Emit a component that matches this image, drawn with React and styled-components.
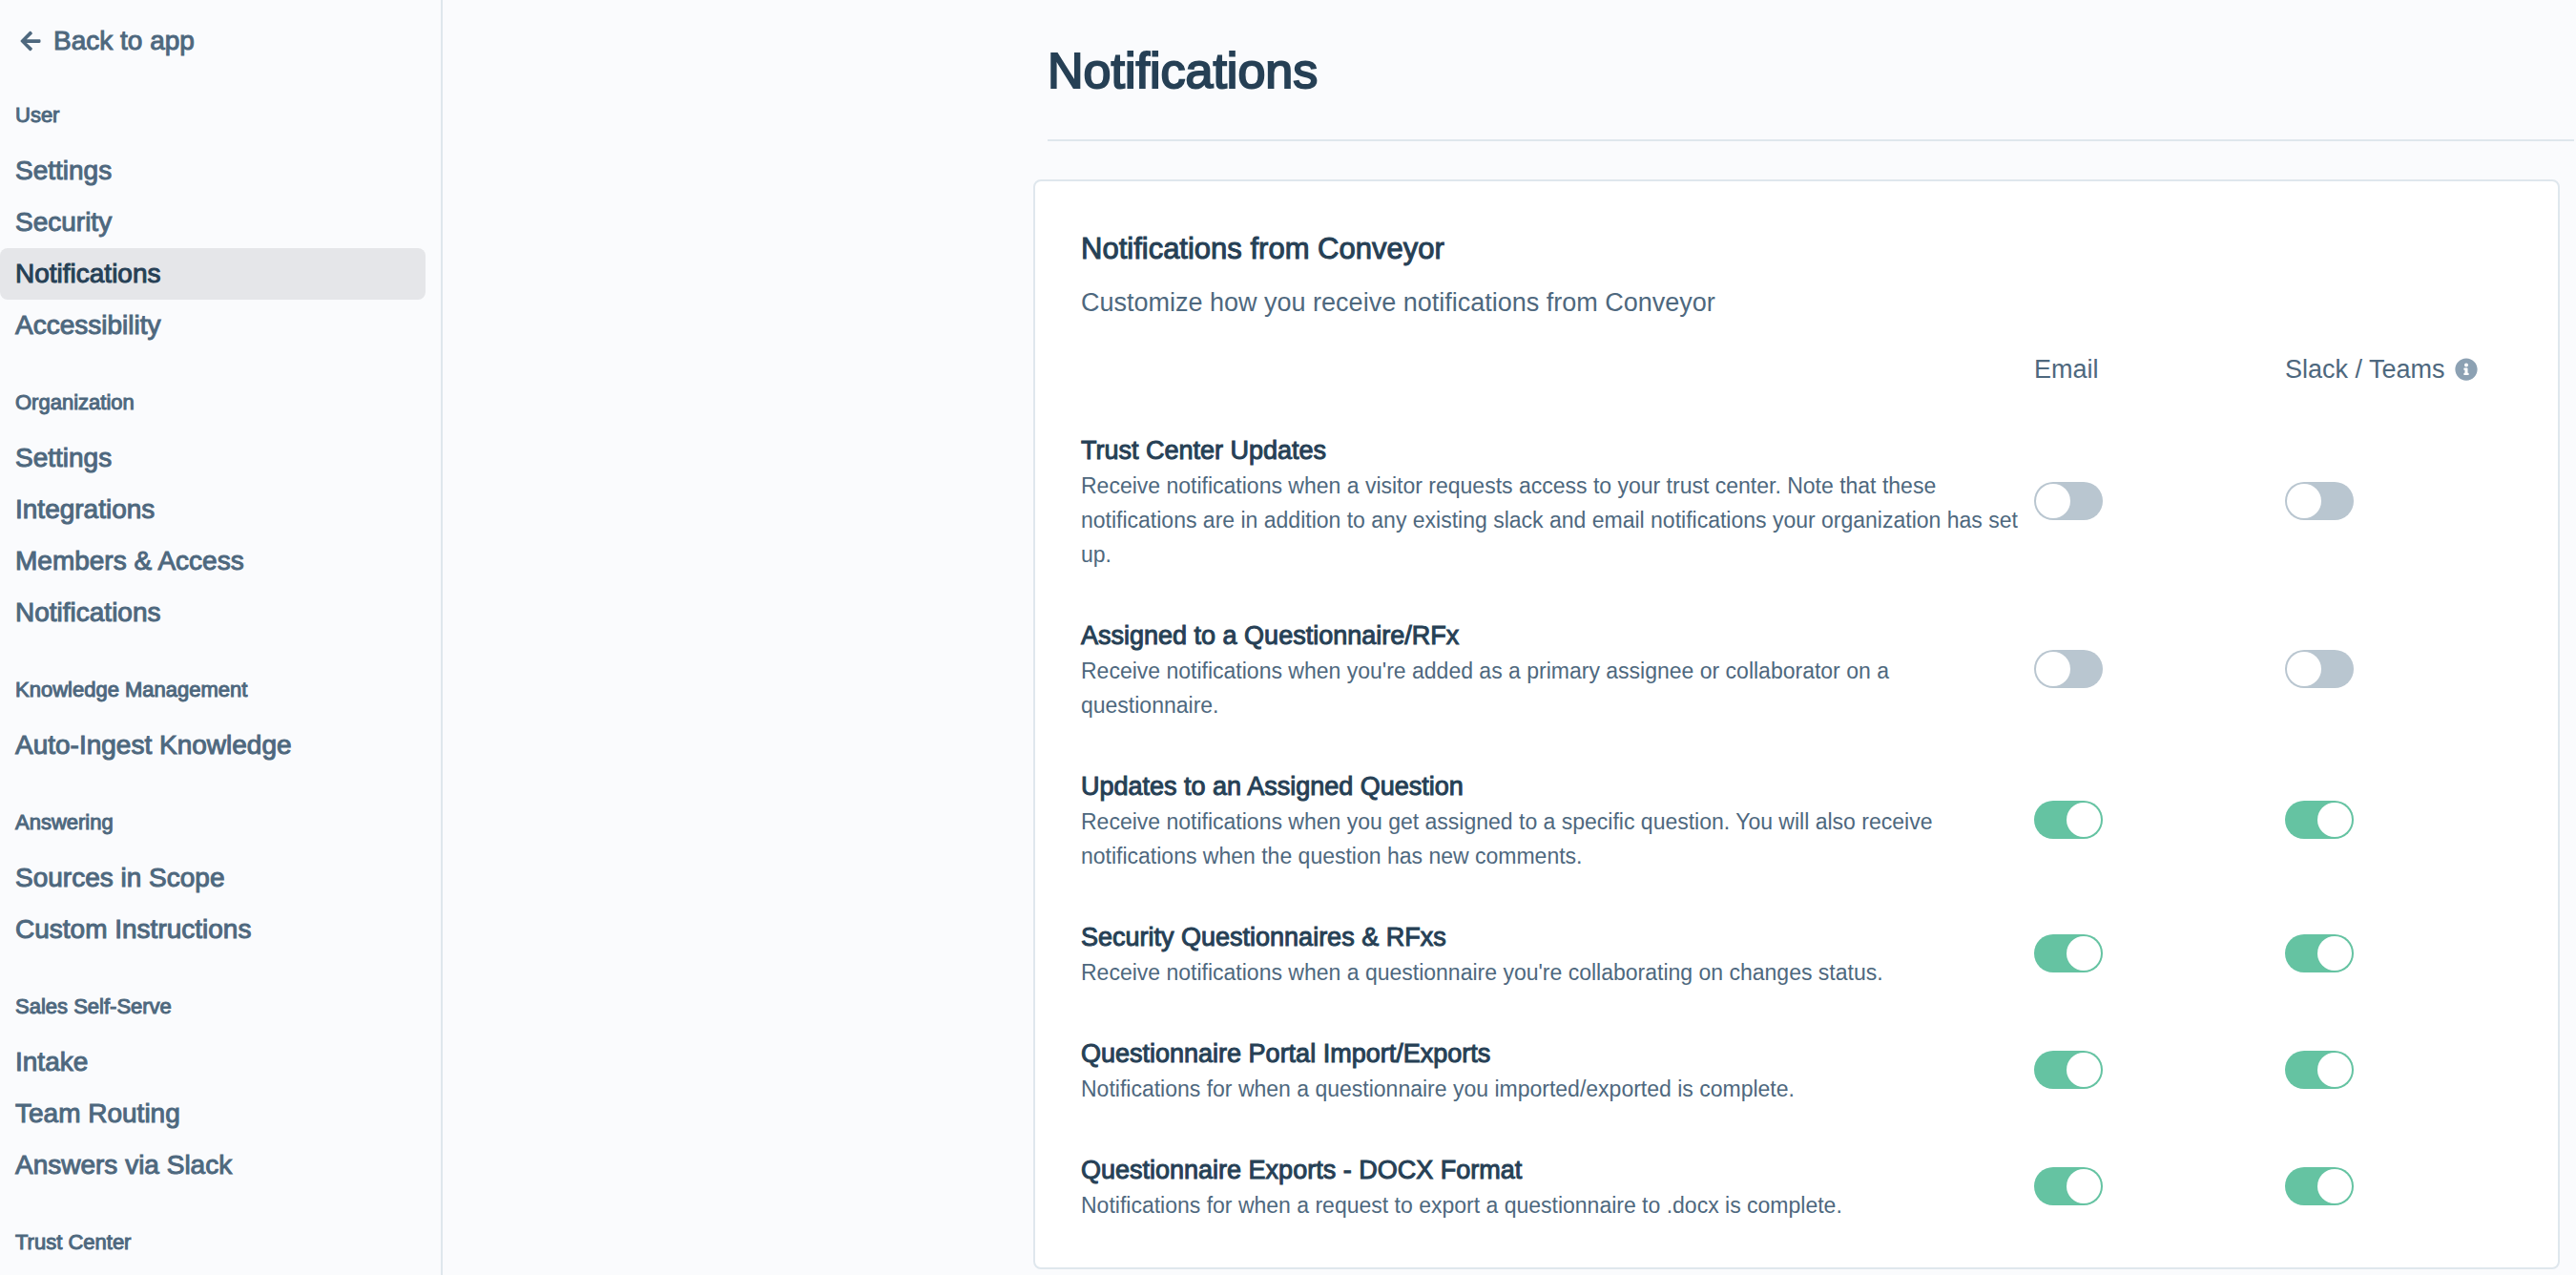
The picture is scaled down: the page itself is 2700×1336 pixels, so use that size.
import React, { useState } from 'react';
import styled, { createGlobalStyle, css, ThemeProvider } from 'styled-components';
import { FaArrowLeft, FaInfoCircle } from 'react-icons/fa';

const theme = {
  colors: {
    page: '#fafbfd',
    card: '#ffffff',
    border: '#dfe7ed',
    heading: '#264055',
    text: '#4e687e',
    muted: '#8ca1b3',
    active: 'rgba(20, 20, 30, 0.09)',
    switchOff: '#b9c6d0',
    switchOn: '#65c3a2',
  },
};

const GlobalStyle = createGlobalStyle`
  * {
    box-sizing: border-box;
  }

  body {
    margin: 0;
    background: ${theme.colors.page};
    color: ${theme.colors.text};
    font-family: 'Liberation Sans', Arial, sans-serif;
    font-size: 27px;
  }
`;

// the font has no medium cut, so a thin stroke stands between regular and bold
const medium = css`
  font-weight: 400;
  -webkit-text-stroke: 1px currentColor;
`;

const Layout = styled.div`
  display: flex;
  min-height: 100vh;
`;

const Sidebar = styled.aside`
  flex: none;
  width: 464px;
  padding: 16px 16px 0 0;
  border-right: 2px solid ${(props) => props.theme.colors.border};
`;

const BackLink = styled.a`
  ${medium}
  display: flex;
  align-items: center;
  gap: 12px;
  padding-left: 20px;
  color: ${(props) => props.theme.colors.text};
  font-size: 28px;
  line-height: 54px;
  text-decoration: none;
`;

const Nav = styled.nav`
  display: flex;
  flex-direction: column;
  gap: 41px;
  padding-top: 38px;
`;

const SectionTitle = styled.h2`
  ${medium}
  margin: 0 0 18px;
  padding-left: 16px;
  font-size: 22px;
  line-height: 26px;
`;

const NavList = styled.ul`
  margin: 0;
  padding: 0;
  list-style: none;
`;

const NavLink = styled.a`
  ${medium}
  display: block;
  padding-left: 16px;
  border-radius: 8px;
  background: ${(props) => props.$active ? props.theme.colors.active : 'transparent'};
  color: ${(props) => props.theme.colors[props.$active ? 'heading' : 'text']};
  font-size: 28px;
  line-height: 54px;
  text-decoration: none;
`;

const Main = styled.main`
  flex: 1;
  min-width: 0;
  display: flex;
  flex-direction: column;
  align-items: flex-end;
  padding: 0 2px 6px;
`;

const PageHeader = styled.header`
  width: 100%;
  max-width: 1600px;
  padding: 42px 0 40px;
  border-bottom: 2px solid ${(props) => props.theme.colors.border};
`;

const PageTitle = styled.h1`
  ${medium}
  margin: 0;
  color: ${(props) => props.theme.colors.heading};
  font-size: 52px;
  line-height: 64px;
  -webkit-text-stroke-width: 2px;
`;

const Card = styled.section`
  width: 100%;
  max-width: 1600px;
  margin: 40px 15px 0 0;
  padding: 49px 48px 24px;
  border: 2px solid ${(props) => props.theme.colors.border};
  border-radius: 8px;
  background: ${(props) => props.theme.colors.card};
`;

const CardTitle = styled.h2`
  ${medium}
  margin: 0 0 12px;
  color: ${(props) => props.theme.colors.heading};
  font-size: 31px;
  line-height: 44px;
`;

const CardText = styled.p`
  margin: 0;
  line-height: 44px;
`;

const Table = styled.table`
  width: 100%;
  table-layout: fixed;
  border-collapse: collapse;
  text-align: left;
`;

const ColumnHeader = styled.th`
  width: ${(props) => props.$width || 'auto'};
  padding: 26px 0 19px;
  font-weight: 400;
  line-height: 44px;
`;

const HeaderLabel = styled.span`
  display: flex;
  align-items: center;
  gap: 10px;
`;

const InfoButton = styled.button`
  display: flex;
  padding: 0;
  border: 0;
  background: none;
  color: ${(props) => props.theme.colors.muted};
  font-size: 24px;
`;

const RowHeader = styled.th`
  padding: 25px 16px 23px 0;
  font-weight: 400;
`;

const RowTitle = styled.div`
  ${medium}
  color: ${(props) => props.theme.colors.heading};
  font-size: 27px;
  line-height: 38px;
`;

const RowText = styled.div`
  font-size: 23px;
  line-height: 36px;
`;

const SwitchCell = styled.td`
  padding: 0;
  vertical-align: middle;
`;

const Switch = styled.input`
  appearance: none;
  display: block;
  width: 72px;
  height: 40px;
  margin: 0;
  padding: 2px;
  border-radius: 20px;
  background: ${(props) => props.theme.colors.switchOff};
  cursor: pointer;

  &::before {
    content: '';
    display: block;
    width: 36px;
    height: 36px;
    border-radius: 50%;
    background: #ffffff;
  }

  &:checked {
    background: ${(props) => props.theme.colors.switchOn};
  }

  &:checked::before {
    margin-left: auto;
  }
`;

const sections = [
  { title: 'User', items: ['Settings', 'Security', 'Notifications', 'Accessibility'], active: 'Notifications' },
  { title: 'Organization', items: ['Settings', 'Integrations', 'Members & Access', 'Notifications'] },
  { title: 'Knowledge Management', items: ['Auto-Ingest Knowledge'] },
  { title: 'Answering', items: ['Sources in Scope', 'Custom Instructions'] },
  { title: 'Sales Self-Serve', items: ['Intake', 'Team Routing', 'Answers via Slack'] },
  { title: 'Trust Center', items: [] },
];

const notifications = [
  {
    title: 'Trust Center Updates',
    text: 'Receive notifications when a visitor requests access to your trust center. Note that these notifications are in addition to any existing slack and email notifications your organization has set up.',
    enabled: false,
  },
  {
    title: 'Assigned to a Questionnaire/RFx',
    text: "Receive notifications when you're added as a primary assignee or collaborator on a questionnaire.",
    enabled: false,
  },
  {
    title: 'Updates to an Assigned Question',
    text: 'Receive notifications when you get assigned to a specific question. You will also receive notifications when the question has new comments.',
    enabled: true,
  },
  {
    title: 'Security Questionnaires & RFxs',
    text: "Receive notifications when a questionnaire you're collaborating on changes status.",
    enabled: true,
  },
  {
    title: 'Questionnaire Portal Import/Exports',
    text: 'Notifications for when a questionnaire you imported/exported is complete.',
    enabled: true,
  },
  {
    title: 'Questionnaire Exports - DOCX Format',
    text: 'Notifications for when a request to export a questionnaire to .docx is complete.',
    enabled: true,
  },
];

const NotificationRow = ({ title, text, enabled }) => {
  const [email, setEmail] = useState(enabled);
  const [slack, setSlack] = useState(enabled);

  return (
    <tr>
      <RowHeader scope="row">
        <RowTitle>{ title }</RowTitle>
        <RowText>{ text }</RowText>
      </RowHeader>
      <SwitchCell>
        <Switch
          type="checkbox"
          role="switch"
          aria-label={`${title}: Email`}
          checked={email}
          onChange={(e) => setEmail(e.target.checked)}
        />
      </SwitchCell>
      <SwitchCell>
        <Switch
          type="checkbox"
          role="switch"
          aria-label={`${title}: Slack / Teams`}
          checked={slack}
          onChange={(e) => setSlack(e.target.checked)}
        />
      </SwitchCell>
    </tr>
  );
};

const App = () => (
  <ThemeProvider theme={theme}>
    <GlobalStyle />
    <Layout>
      <Sidebar>
        <BackLink href="#app">
          <FaArrowLeft size={24} aria-hidden="true" />
          Back to app
        </BackLink>
        <Nav aria-label="Settings">
          { sections.map((section) => (
            <div key={section.title}>
              <SectionTitle>{ section.title }</SectionTitle>
              { section.items.length > 0 &&
                <NavList>
                  { section.items.map((item) => (
                    <li key={item}>
                      <NavLink
                        href="#settings"
                        $active={item === section.active}
                        aria-current={item === section.active ? 'page' : undefined}
                      >
                        { item }
                      </NavLink>
                    </li>
                  )) }
                </NavList>
              }
            </div>
          )) }
        </Nav>
      </Sidebar>
      <Main>
        <PageHeader>
          <PageTitle>Notifications</PageTitle>
        </PageHeader>
        <Card>
          <CardTitle>Notifications from Conveyor</CardTitle>
          <CardText>Customize how you receive notifications from Conveyor</CardText>
          <Table>
            <thead>
              <tr>
                <ColumnHeader aria-label="Notification" />
                <ColumnHeader scope="col" $width="263px">Email</ColumnHeader>
                <ColumnHeader scope="col" $width="238px">
                  <HeaderLabel>
                    Slack / Teams
                    <InfoButton type="button" aria-label="About Slack / Teams notifications">
                      <FaInfoCircle aria-hidden="true" />
                    </InfoButton>
                  </HeaderLabel>
                </ColumnHeader>
              </tr>
            </thead>
            <tbody>
              { notifications.map((row) => (
                <NotificationRow key={row.title} {...row} />
              )) }
            </tbody>
          </Table>
        </Card>
      </Main>
    </Layout>
  </ThemeProvider>
);

export default App;
